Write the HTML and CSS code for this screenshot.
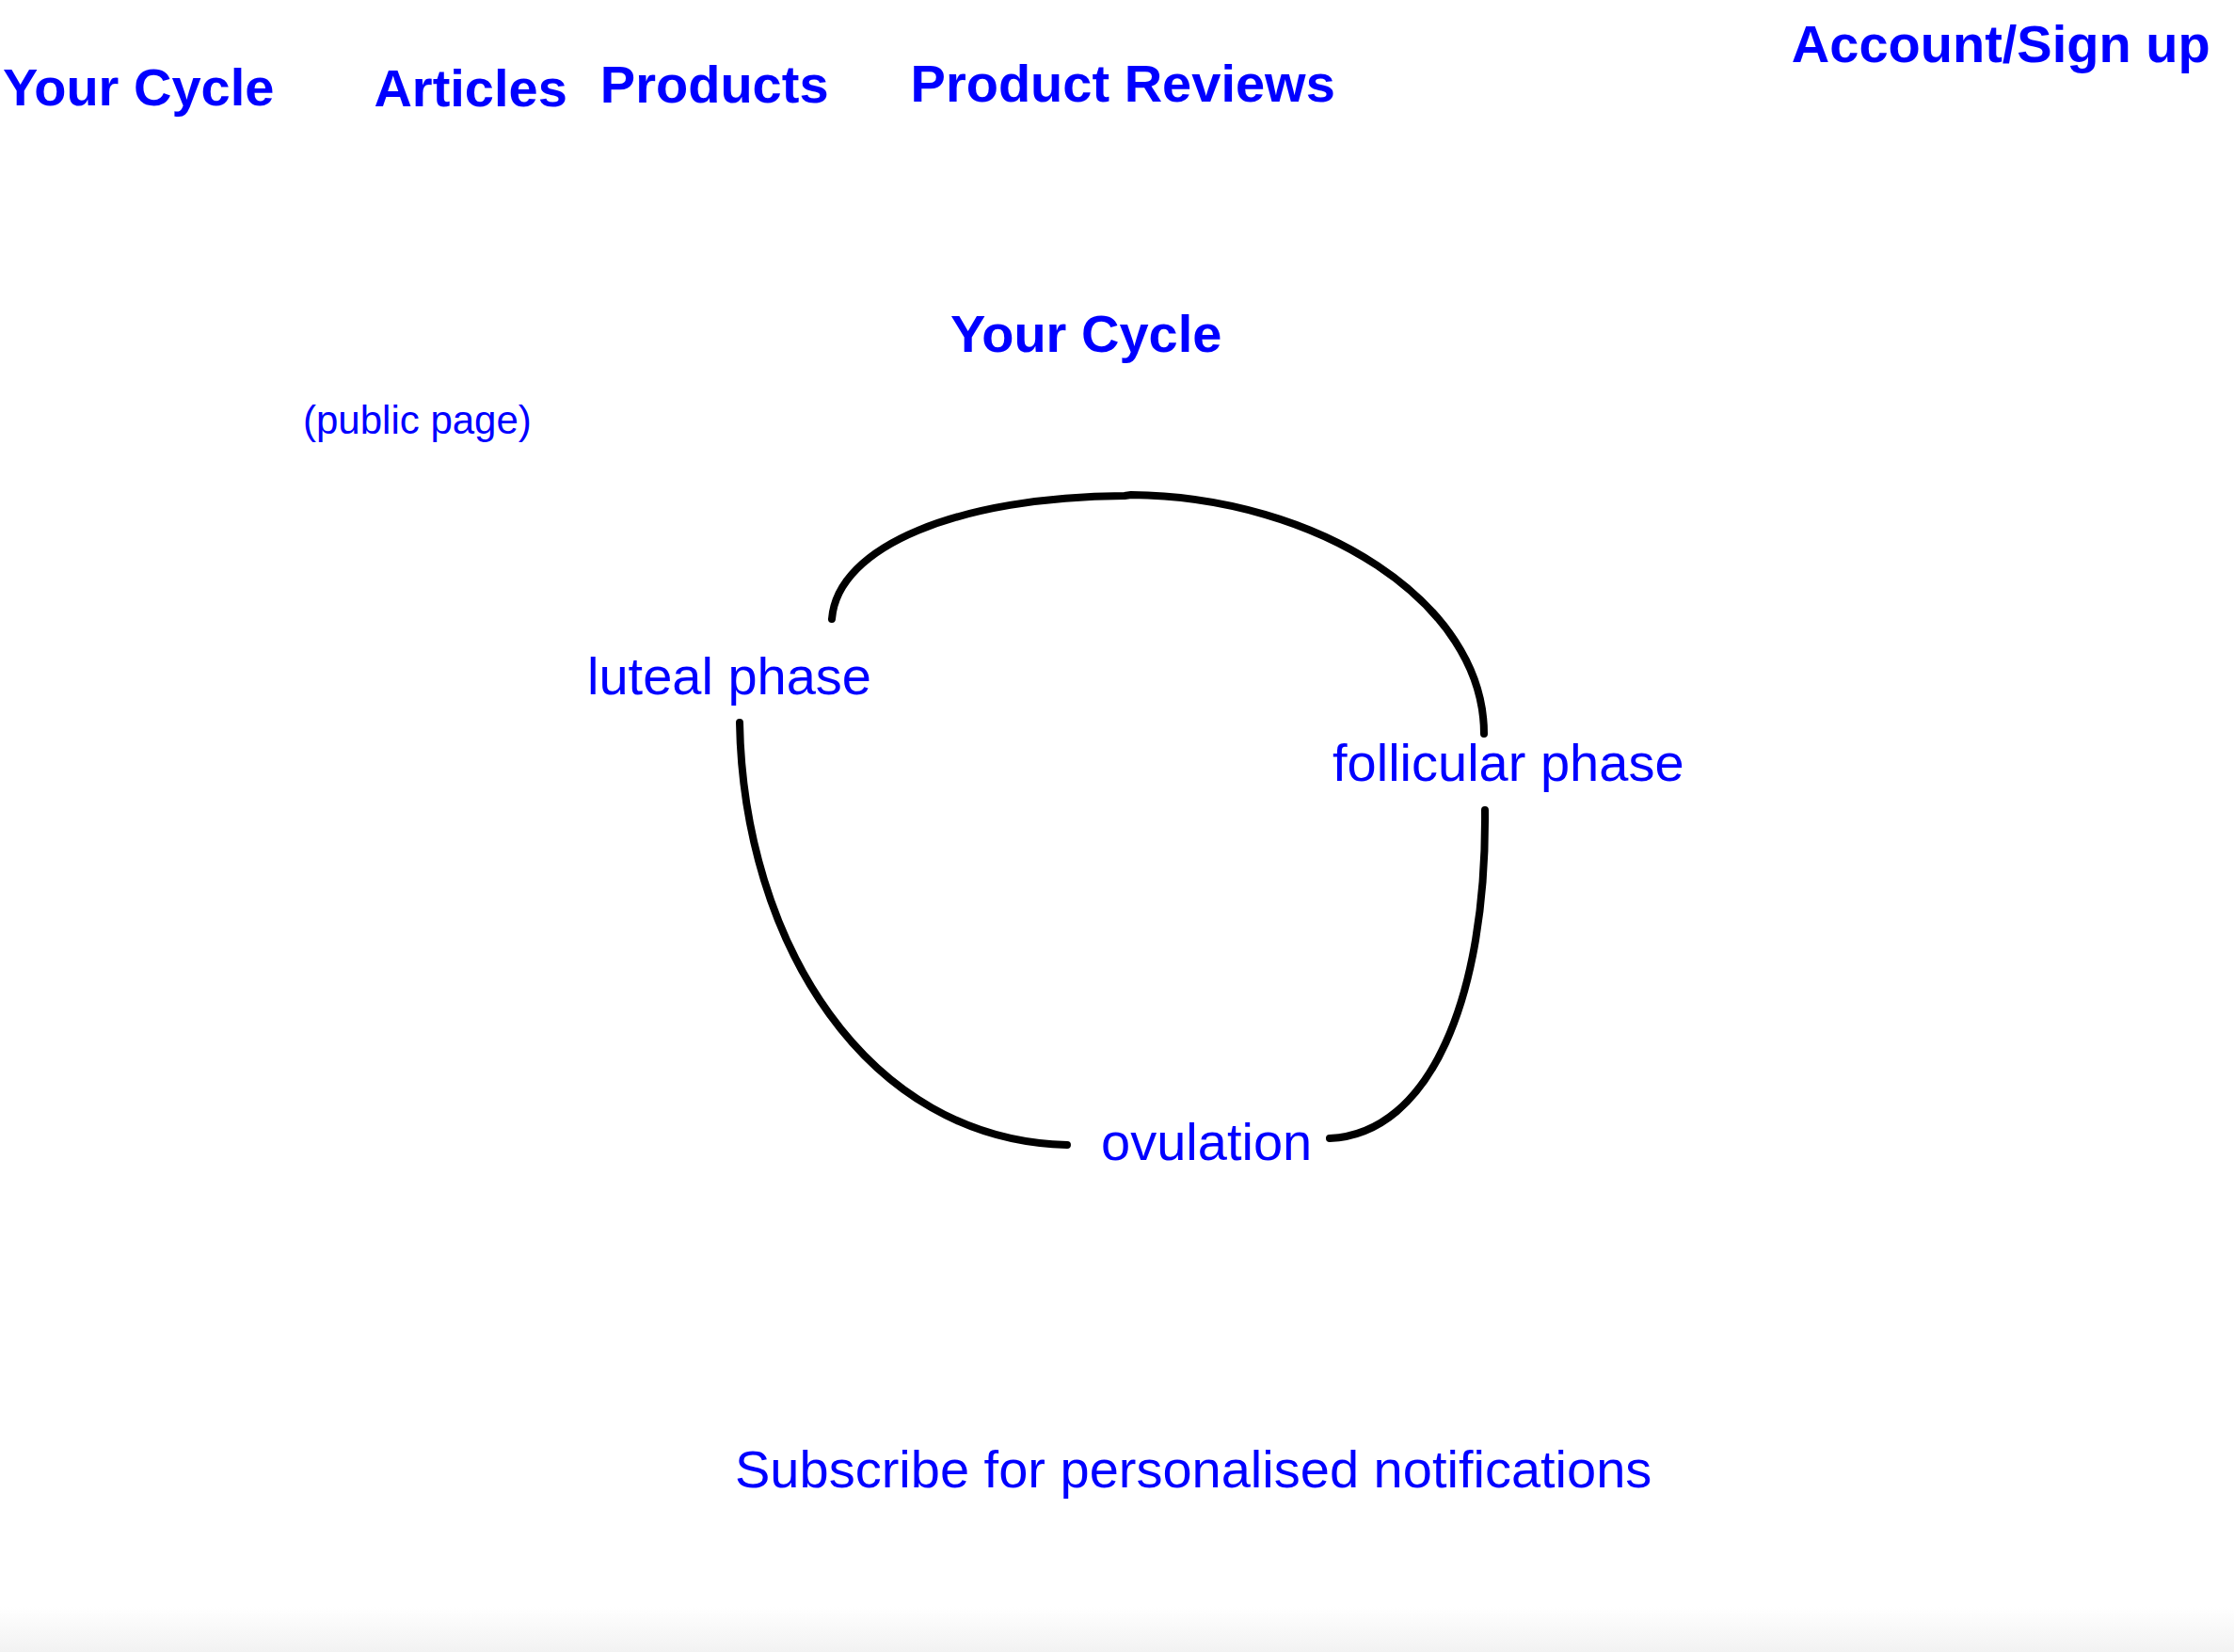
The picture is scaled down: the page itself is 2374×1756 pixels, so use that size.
FILE: index.html
```html
<!DOCTYPE html>
<html lang="en">
<head>
  <meta charset="UTF-8" />
  <meta name="viewport" content="width=device-width, initial-scale=1.0"/>
  <title>Your Cycle</title>
  <link rel="stylesheet" href="styles.css">
</head>
<body>
<div class="nav">
  <a href="#" class="nav-cycle">Your Cycle</a>
  <a href="#" class="nav-articles">Articles</a>
  <a href="#" class="nav-products">Products</a>
  <a href="#" class="nav-reviews">Product Reviews</a>
  <a href="#" class="nav-account">Account/Sign up</a>
</div>

<h1 class="title">Your Cycle</h1>
<div class="note">(public page)</div>

<div class="cycle">
  <svg class="cycle-lines" width="1220" height="760" viewBox="0 0 1220 760">
    <path d="M284 158 C290 80 420 28 595 27 L602 26 C800 28 977 140 977 280" />
    <path d="M186 268 C190 500 320 712 534 717" />
    <path d="M978 361 C980 560 920 705 813 710" />
  </svg>
  <a href="#" class="phase phase-luteal">luteal phase</a>
  <a href="#" class="phase phase-follicular">follicular phase</a>
  <a href="#" class="phase phase-ovulation">ovulation</a>
</div>

<a href="#" class="subscribe">Subscribe for personalised notifications</a>
</body>
</html>
```

FILE: styles.css
```css
html {
  height: 100%;
  background: linear-gradient(#fff calc(100% - 48px), #f2f2f2);
}
body {
  margin: 0;
  font-family: 'Liberation Sans', Arial, sans-serif;
  color: #00f;
}
a {
  color: #00f;
  text-decoration: none;
}
.nav {
  display: flex;
  align-items: flex-start;
  padding-left: 3px;
  font-size: 56px;
  font-weight: bold;
  line-height: 64px;
}
.nav-cycle {
  margin-top: 61px;
}
.nav-articles {
  margin-top: 62px;
  margin-left: 106px;
}
.nav-products {
  margin-top: 58px;
  margin-left: 35px;
}
.nav-reviews {
  margin-top: 57px;
  margin-left: 87px;
}
.nav-account {
  margin-top: 15px;
  margin-left: 485px;
}
.title {
  margin: 197px 0 0 1010px;
  font-size: 56px;
  line-height: 64px;
  font-weight: bold;
}
.note {
  margin: 36px 0 0 322px;
  font-size: 42px;
  line-height: 48px;
}
.cycle {
  position: relative;
  width: 1220px;
  height: 760px;
  margin: 29px 0 0 600px;
}
.cycle-lines {
  display: block;
}
.cycle-lines path {
  fill: none;
  stroke: #000;
  stroke-width: 8;
  stroke-linecap: round;
  stroke-linejoin: round;
}
.phase {
  position: absolute;
  font-size: 56px;
  line-height: 64px;
  white-space: nowrap;
}
.phase-luteal {
  left: 24px;
  top: 187px;
}
.phase-follicular {
  left: 816px;
  top: 279px;
}
.phase-ovulation {
  left: 570px;
  top: 682px;
}
.subscribe {
  display: inline-block;
  margin: 270px 0 0 781px;
  font-size: 56px;
  line-height: 64px;
}
```
